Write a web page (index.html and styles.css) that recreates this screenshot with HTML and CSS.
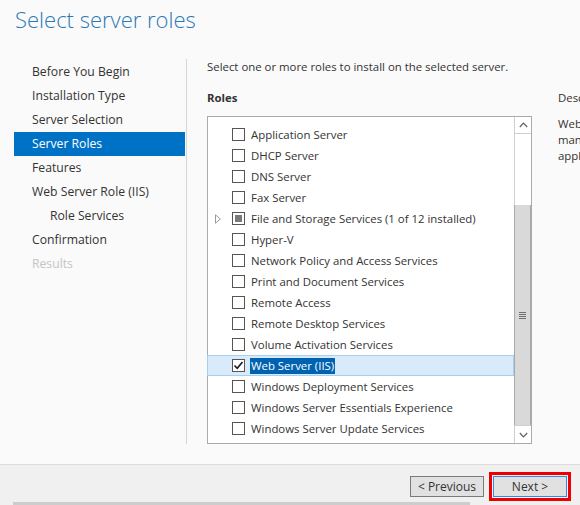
FILE: index.html
```html
<!DOCTYPE html>
<html>
<head>
<meta charset="utf-8">
<link rel="stylesheet" href="styles.css">
</head>
<body>
<div class="page">
  <header class="header">
    <h1 class="title">Select server roles</h1>
  </header>
  <div class="main">
    <nav class="nav">
      <div class="nav-item">Before You Begin</div>
      <div class="nav-item">Installation Type</div>
      <div class="nav-item">Server Selection</div>
      <div class="nav-item active">Server Roles</div>
      <div class="nav-item">Features</div>
      <div class="nav-item">Web Server Role (IIS)</div>
      <div class="nav-item sub">Role Services</div>
      <div class="nav-item">Confirmation</div>
      <div class="nav-item disabled">Results</div>
    </nav>
    <section class="content">
      <p class="intro">Select one or more roles to install on the selected server.</p>
      <div class="columns">
        <div class="roles-col">
          <div class="heading">Roles</div>
          <div class="listbox">
            <div class="rows">
              <div class="row"><span class="exp"></span><span class="cb"></span><span class="label">Application Server</span></div>
              <div class="row"><span class="exp"></span><span class="cb"></span><span class="label">DHCP Server</span></div>
              <div class="row"><span class="exp"></span><span class="cb"></span><span class="label">DNS Server</span></div>
              <div class="row"><span class="exp"></span><span class="cb"></span><span class="label">Fax Server</span></div>
              <div class="row"><span class="exp"><svg width="6" height="10" viewBox="0 0 6 10"><path d="M0.5 0.8 L5.3 5 L0.5 9.2 Z" fill="none" stroke="#9a9a9a" stroke-width="1"/></svg></span><span class="cb partial"><span class="fill"></span></span><span class="label">File and Storage Services (1 of 12 installed)</span></div>
              <div class="row"><span class="exp"></span><span class="cb"></span><span class="label">Hyper-V</span></div>
              <div class="row"><span class="exp"></span><span class="cb"></span><span class="label">Network Policy and Access Services</span></div>
              <div class="row"><span class="exp"></span><span class="cb"></span><span class="label">Print and Document Services</span></div>
              <div class="row"><span class="exp"></span><span class="cb"></span><span class="label">Remote Access</span></div>
              <div class="row"><span class="exp"></span><span class="cb"></span><span class="label">Remote Desktop Services</span></div>
              <div class="row"><span class="exp"></span><span class="cb"></span><span class="label">Volume Activation Services</span></div>
              <div class="row selected"><span class="exp"></span><span class="cb"><svg width="11" height="11" viewBox="0 0 11 11"><path d="M1.5 5.5 L4.2 8.3 L9.5 2" fill="none" stroke="#1a1a1a" stroke-width="1.6"/></svg></span><span class="label hl">Web Server (IIS)</span></div>
              <div class="row"><span class="exp"></span><span class="cb"></span><span class="label">Windows Deployment Services</span></div>
              <div class="row"><span class="exp"></span><span class="cb"></span><span class="label">Windows Server Essentials Experience</span></div>
              <div class="row"><span class="exp"></span><span class="cb"></span><span class="label">Windows Server Update Services</span></div>
            </div>
            <div class="scrollbar">
              <div class="sb-btn up"><svg width="9" height="6" viewBox="0 0 9 6"><path d="M0.8 5 L4.5 1.2 L8.2 5" fill="none" stroke="#606060" stroke-width="1.2"/></svg></div>
              <div class="sb-track"></div>
              <div class="sb-thumb"><span class="grip"></span></div>
              <div class="sb-btn down"><svg width="9" height="6" viewBox="0 0 9 6"><path d="M0.8 1 L4.5 4.8 L8.2 1" fill="none" stroke="#606060" stroke-width="1.2"/></svg></div>
            </div>
          </div>
        </div>
        <div class="desc-col">
          <div class="heading normal">Description</div>
          <p class="desc">Web Server (IIS) provides a reliable, manageable, and scalable Web application infrastructure.</p>
        </div>
      </div>
    </section>
  </div>
  <footer class="footer">
    <button class="btn">&lt; Previous</button>
    <button class="btn primary">Next &gt;</button>
  </footer>
  <div class="hscroll"><span class="hscroll-bar"></span></div>
</div>
</body>
</html>
```
FILE: styles.css
```css
html, body {
  margin: 0;
  padding: 0;
}
body {
  width: 580px;
  height: 505px;
  overflow: hidden;
  background: #fafafa;
  font-family: "Open Sans", "Noto Sans", sans-serif;
  font-size: 11.4px;
  color: #333333;
}
.page {
  display: flex;
  flex-direction: column;
  width: 580px;
  height: 505px;
}
.header {
  height: 59px;
  padding-left: 15px;
  box-sizing: border-box;
}
.title {
  margin: 0;
  padding-top: 4px;
  font-size: 22px;
  font-weight: 300;
  line-height: 30px;
  color: #2a78b4;
  white-space: nowrap;
}
.main {
  display: flex;
  height: 385px;
  margin-bottom: 20px;
}
.nav {
  width: 187px;
  flex: none;
  padding: 1px 0 0 14px;
  box-sizing: border-box;
  border-right: 1px solid #d6d6d6;
  margin-right: 20px;
  font-size: 12.2px;
}
.nav-item {
  width: 171px;
  height: 24px;
  line-height: 24px;
  padding-left: 18px;
  box-sizing: border-box;
  white-space: nowrap;
  color: #333333;
}
.nav-item.sub {
  padding-left: 36px;
}
.nav-item.active {
  background: #0072c6;
  color: #ffffff;
}
.nav-item.disabled {
  color: #c4c4c4;
}
.content {
  flex: 1;
  min-width: 0;
}
.intro {
  margin: 0 0 15px;
  line-height: 16px;
  white-space: nowrap;
}
.columns {
  display: flex;
  gap: 26px;
}
.roles-col {
  width: 325px;
  flex: none;
}
.heading {
  font-weight: 700;
  line-height: 16px;
  margin-bottom: 10px;
  white-space: nowrap;
}
.heading.normal {
  font-weight: 400;
}
.listbox {
  display: flex;
  height: 328px;
  border: 1px solid #ababab;
  box-sizing: border-box;
  background: #ffffff;
}
.rows {
  flex: 1;
  padding-top: 7px;
  min-width: 0;
}
.row {
  display: flex;
  align-items: center;
  height: 21px;
  box-sizing: border-box;
  white-space: nowrap;
}
.row.selected {
  background: #d9ebfb;
  border: 1px solid #a6cff2;
  margin-left: -1px;
}
.exp {
  width: 24px;
  flex: none;
  display: flex;
  justify-content: center;
  align-items: center;
  padding-right: 4px;
  box-sizing: border-box;
}
.cb {
  width: 13px;
  height: 13px;
  flex: none;
  border: 1px solid #555555;
  box-sizing: border-box;
  background: #ffffff;
  display: flex;
  align-items: center;
  justify-content: center;
  margin-right: 6px;
}
.cb .fill {
  width: 7px;
  height: 7px;
  background: #7a7a7a;
}
.label {
  color: #333333;
  line-height: 16px;
}
.label.hl {
  background: #0063b1;
  color: #ffffff;
  padding: 0 1px;
  margin-left: -1px;
}
.scrollbar {
  width: 17px;
  flex: none;
  display: flex;
  flex-direction: column;
  border-left: 1px solid #d0d0d0;
  box-sizing: border-box;
}
.sb-btn {
  height: 17px;
  flex: none;
  display: flex;
  align-items: center;
  justify-content: center;
  background: #ffffff;
}
.sb-btn.up {
  height: 16px;
  border-bottom: 1px solid #d0d0d0;
}
.sb-btn.down {
  height: 17px;
  border-top: 1px solid #d0d0d0;
}
.sb-track {
  height: 71px;
  flex: none;
  background: #ffffff;
}
.sb-thumb {
  flex: 1;
  background: #d9d9d9;
  border-left: 1px solid #a9a9a9;
  border-right: 1px solid #a9a9a9;
  margin-left: -1px;
  display: flex;
  align-items: center;
  justify-content: center;
}
.grip {
  width: 7px;
  height: 7px;
  margin-top: 1px;
  background: repeating-linear-gradient(to bottom, #6e6e6e 0, #6e6e6e 1px, transparent 1px, transparent 2px);
}
.desc-col {
  width: 215px;
  flex: none;
}
.desc {
  margin: 0;
  line-height: 16px;
}
.footer {
  flex: none;
  height: 38px;
  box-sizing: border-box;
  border-top: 1px solid #dcdcdc;
  background: #f0f0f0;
  display: flex;
  justify-content: flex-end;
  align-items: flex-start;
  gap: 9px;
  padding: 11px 13px 0 0;
}
.btn {
  width: 74px;
  height: 21px;
  margin: 0;
  padding: 0;
  border: 1px solid #7a7a7a;
  background: #e1e1e1;
  font-family: "Open Sans", "Noto Sans", sans-serif;
  font-size: 12px;
  color: #333333;
}
.btn.primary {
  border-color: #2d8ee6;
  outline: 3px solid #ee0000;
  outline-offset: 1px;
}
.hscroll {
  flex: 1;
  background: #f0f0f0;
}
.hscroll-bar {
  display: block;
  margin-left: 13px;
  width: 457px;
  height: 3px;
  background: #cdcdcd;
}
```
